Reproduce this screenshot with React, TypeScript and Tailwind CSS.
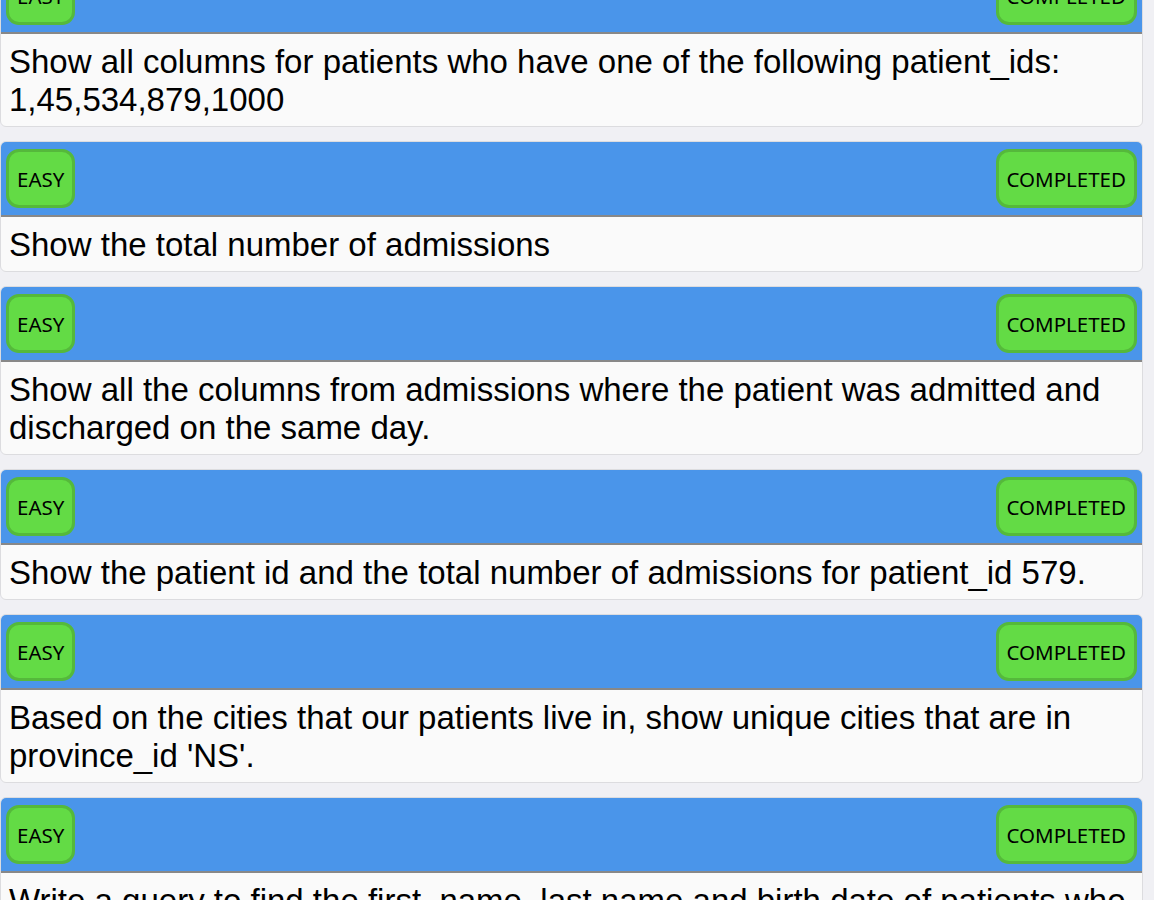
import React from 'react';

const questions = [
  'Show all columns for patients who have one of the following patient_ids: 1,45,534,879,1000',
  'Show the total number of admissions',
  'Show all the columns from admissions where the patient was admitted and discharged on the same day.',
  'Show the patient id and the total number of admissions for patient_id 579.',
  "Based on the cities that our patients live in, show unique cities that are in province_id 'NS'.",
  'Write a query to find the first_name, last name and birth date of patients who has height greater than 160 and weight greater than 70',
];

const Badge: React.FC<{ label: string }> = ({ label }) => (
  <div
    className="h-[59px] flex items-center px-2 pt-[2px] rounded-[13px] border-[3px] border-[#55b93b] bg-[#63db45] text-black text-[20.5px]"
    style={{ fontFamily: '"Noto Sans", "Open Sans", sans-serif' }}
  >
    {label}
  </div>
);

const QuestionCard: React.FC<{ text: string }> = ({ text }) => (
  <div className="border border-[#dcdcdf] rounded-[6px] overflow-hidden bg-[#fafafa]">
    {/* Header */}
    <div className="flex items-center justify-between bg-[#4a95ea] px-[5px] py-[7px] border-b-2 border-[#888888]">
      <Badge label="EASY" />
      <Badge label="COMPLETED" />
    </div>
    {/* Body */}
    <div
      className="px-2 pt-[9px] pb-[7px] text-[33px] leading-[38px] text-black"
      style={{ fontFamily: '"Liberation Sans", Arial, sans-serif' }}
    >
      {text}
    </div>
  </div>
);

export default function App() {
  return (
    <div className="h-[900px] overflow-hidden bg-[#f0f0f4]">
      <div className="flex flex-col gap-[14px] mr-[11px] -mt-[42px]">
        {questions.map((q, i) => (
          <QuestionCard key={i} text={q} />
        ))}
      </div>
    </div>
  );
}
